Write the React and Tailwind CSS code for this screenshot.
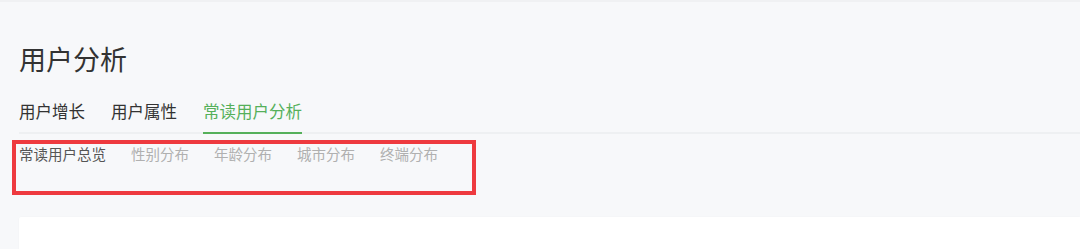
import React, { useState } from 'react';

const font = { fontFamily: '"Noto Sans CJK SC", "Noto Sans", sans-serif' };

const mainTabs = ['用户增长', '用户属性', '常读用户分析'];
const subTabs = ['常读用户总览', '性别分布', '年龄分布', '城市分布', '终端分布'];

export default function App() {
  const [tab, setTab] = useState(2);
  const [sub, setSub] = useState(0);

  return (
    <div
      className="relative h-[249px] w-full overflow-hidden border-t-2 border-[#f0f1f3] bg-[#f7f8fa]"
      style={font}
    >
      <div className="pl-[19px]">
        <h1 className="pt-[43px] text-[27px] leading-[27px] font-normal text-[#333]">用户分析</h1>

        <div className="mt-[31px] flex gap-[26px] border-b-2 border-[#eef0f2]">
          {mainTabs.map((t, i) => (
            <button
              key={t}
              onClick={() => setTab(i)}
              className={`-mb-[2px] border-b-2 pb-[12px] text-[16.5px] leading-[17px] ${
                tab === i ? 'border-[#55b05a] text-[#55b05a]' : 'border-transparent text-[#333]'
              }`}
            >
              {t}
            </button>
          ))}
        </div>

        <div className="mt-[12px] flex gap-[25px]">
          {subTabs.map((t, i) => (
            <button
              key={t}
              onClick={() => setSub(i)}
              className={`text-[14.5px] leading-[15px] ${sub === i ? 'text-[#555]' : 'text-[#b0b0b0]'}`}
            >
              {t}
            </button>
          ))}
        </div>

        <div className="mt-[56px] h-[40px] rounded-tl-[2px] bg-white shadow-[0_0_2px_rgba(0,0,0,0.03)]" />
      </div>

      {/* annotation box */}
      <div className="pointer-events-none absolute left-[12px] top-[138px] h-[55px] w-[464px] border-[4px] border-[#ee3a3f]" />
    </div>
  );
}
